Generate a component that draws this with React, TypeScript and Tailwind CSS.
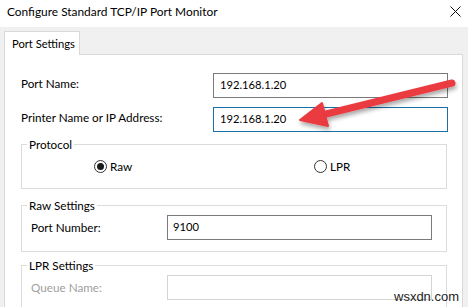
import React from "react";

const Radio = ({ checked, label }: { checked?: boolean; label: string }) => (
  <div className="flex items-center gap-[3px]">
    <div className="w-[13px] h-[13px] rounded-full border border-[#333333] bg-white flex items-center justify-center">
      {checked && <div className="w-[7px] h-[7px] rounded-full bg-[#1a1a1a]" />}
    </div>
    <span>{label}</span>
  </div>
);

const TextBox = ({ value, className = "" }: { value?: string; className?: string }) => (
  <div className={`h-[25px] bg-white border flex items-center ${className}`}>{value}</div>
);

const Group = ({ title, children }: { title: string; children: React.ReactNode }) => (
  <fieldset className="w-[426px] border border-[#dcdcdc]">
    <legend className="ml-[5px] px-[2px] leading-[16px]">{title}</legend>
    {children}
  </fieldset>
);

export default function App() {
  return (
    <div className="relative w-[468px] h-[307px] overflow-hidden bg-[#f0f0f0] text-[11.7px] text-black font-['Lato','Liberation_Sans',sans-serif]">
      {/* Title bar */}
      <div className="h-[27px] bg-white flex items-center justify-between pl-[7px] pr-[7px]">
        <span className="text-[11.9px] -mt-[3px]">Configure Standard TCP/IP Port Monitor</span>
        <svg width="11" height="11" viewBox="0 0 11 11" className="-mt-[4px]">
          <path d="M0.5 0.5 L10.5 10.5 M10.5 0.5 L0.5 10.5" stroke="#111" strokeWidth="1" />
        </svg>
      </div>

      {/* Tabs */}
      <div className="pt-[4px] pl-[4px] flex">
        <div className="relative z-10 -mb-px w-[76px] h-[24px] bg-white border border-b-0 border-[#d9d9d9] pl-[7px] pt-[4px] whitespace-nowrap text-[11.2px]">
          Port Settings
        </div>
      </div>

      {/* Panel */}
      <div className="ml-[4px] w-[459px] h-[260px] bg-white border border-[#d9d9d9] pl-[16px] pt-[18px] flex flex-col">
        <div className="flex items-center">
          <span className="w-[192px] -mt-[3px]">Port Name:</span>
          <TextBox value="192.168.1.20" className="w-[235px] border-[#7a7a7a] pl-[6px] text-[11.2px]" />
        </div>
        <div className="flex items-center mt-[9px]">
          <span className="w-[192px] -mt-[3px]">Printer Name or IP Address:</span>
          <TextBox value="192.168.1.20" className="w-[235px] border-[#1a6fa8] pl-[6px] text-[11.2px]" />
        </div>

        <div className="mt-[4px]">
          <Group title="Protocol">
            <div className="h-[36px] pb-[6px] flex items-center pl-[72px]">
              <div className="w-[220px]">
                <Radio checked label="Raw" />
              </div>
              <Radio label="LPR" />
            </div>
          </Group>
        </div>

        <div className="mt-[8px]">
          <Group title="Raw Settings">
            <div className="flex items-center pl-[9px] pt-[2px] pb-[11px]">
              <span className="w-[136px]">Port Number:</span>
              <TextBox value="9100" className="w-[265px] border-[#7a7a7a] pl-[5px] text-[11.2px]" />
            </div>
          </Group>
        </div>

        <div className="mt-[5px]">
          <Group title="LPR Settings">
            <div className="flex items-center pl-[9px] pt-[2px] pb-[11px] text-[#a0a0a0]">
              <span className="w-[136px]">Queue Name:</span>
              <TextBox className="w-[265px] border-[#d4d4d4]" />
            </div>
          </Group>
        </div>
      </div>

      {/* Annotation arrow */}
      <svg className="absolute left-0 top-0 pointer-events-none" width="468" height="307">
        <defs>
          <filter id="sh" x="-20%" y="-50%" width="140%" height="200%">
            <feDropShadow dx="1" dy="3" stdDeviation="2" floodColor="#000" floodOpacity="0.35" />
          </filter>
        </defs>
        <g filter="url(#sh)" fill="#ea3a40" stroke="#ea3a40">
          <line x1="452" y1="83" x2="318" y2="116" strokeWidth="7" strokeLinecap="round" />
          <polygon points="300,120 322,103 328,126" strokeWidth="2" strokeLinejoin="round" />
        </g>
      </svg>

      {/* Watermark */}
      <span className="absolute left-[394px] top-[289px] text-[13px] text-[#222] leading-[16px] font-['Liberation_Sans',sans-serif]">
        wsxdn.com
      </span>
    </div>
  );
}
